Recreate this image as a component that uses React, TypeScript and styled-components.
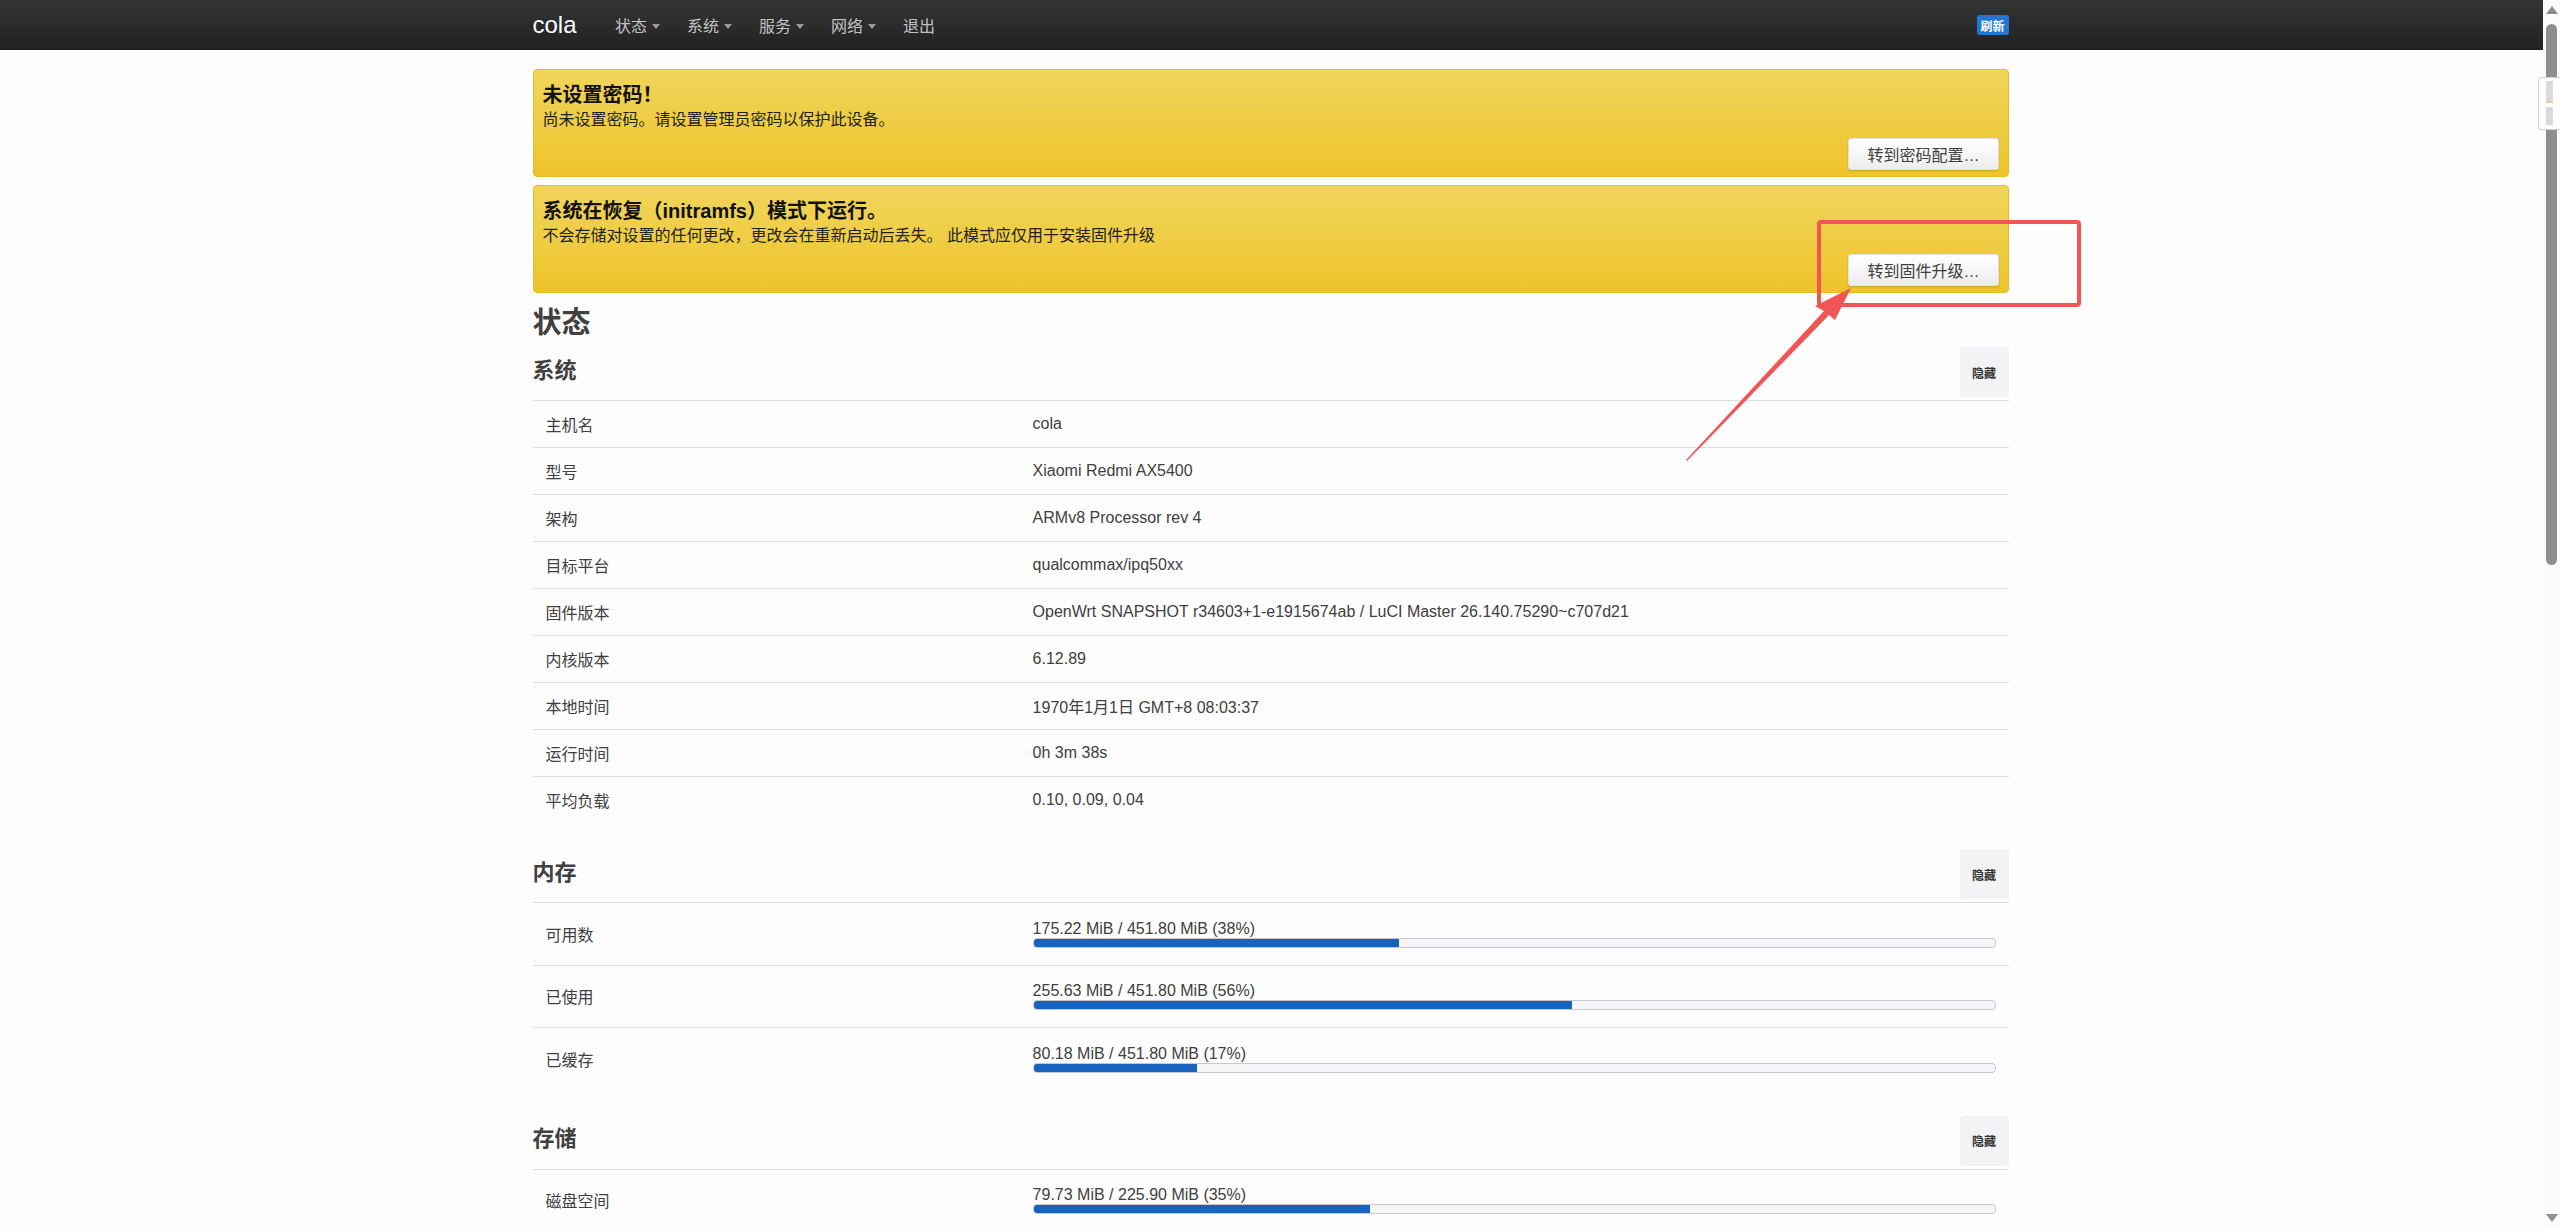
import styled, { createGlobalStyle } from "styled-components"


const GlobalStyle = createGlobalStyle`
	html, body {
		margin: 0;
		height: 100%;
		overflow: hidden;
		background: #fdfdfd;
	}
	body {
		font-family: "Liberation Sans", "Noto Sans CJK SC", sans-serif;
		color: #404040;
	}
	* {
		box-sizing: border-box;
	}
`

const Screen = styled.div`
	position: relative;
	display: flex;
	height: 100vh;
	overflow: hidden;
`

const Page = styled.div`
	flex: 1;
	min-width: 0;
	display: flex;
	flex-direction: column;
`

const Navbar = styled.header`
	flex: none;
	height: 50px;
	background: linear-gradient(#353535, #212121);
`

const Container = styled.div`
	width: 1476px;
	margin: 0 auto;
	position: relative;
	left: -1px;
`

const NavInner = styled(Container)`
	height: 100%;
	display: flex;
	align-items: center;
`

const Brand = styled.span`
	color: #fff;
	font-size: 24px;
	margin-right: 25px;
`

const NavItem = styled.span<{ $dropdown?: boolean }>`
	display: flex;
	align-items: center;
	gap: 5px;
	padding: 0 13.5px;
	font-size: 16px;
	color: #c2c2c2;

	&::after {
		content: "";
		display: ${p => p.$dropdown ? "block" : "none"};
		margin-top: 2px;
		border-top: 5px solid #9c9c9c;
		border-left: 4px solid transparent;
		border-right: 4px solid transparent;
	}
`

const Badge = styled.span`
	margin-left: auto;
	width: 32px;
	height: 20px;
	display: flex;
	align-items: center;
	justify-content: center;
	background: #2277d2;
	border-radius: 3px;
	color: #fff;
	font-size: 12px;
	font-weight: bold;
`

const Main = styled(Container)`
	padding-top: 19px;
`

const Alert = styled.div`
	height: 108px;
	margin-bottom: 8px;
	padding: 12px 9px 6px;
	display: flex;
	flex-direction: column;
	border: 1px solid #e6bd27;
	border-radius: 4px;
	background: linear-gradient(#f0d55c, #eec42a);
`

const AlertTitle = styled.div`
	font-size: 20px;
	line-height: 26px;
	font-weight: bold;
	color: #111;
`

const AlertText = styled.div`
	font-size: 16px;
	line-height: 24px;
	color: #222;
`

const AlertButton = styled.button`
	margin-top: auto;
	align-self: flex-end;
	height: 32px;
	padding: 0 18px;
	font-family: inherit;
	font-size: 16px;
	color: #404040;
	background: linear-gradient(#fff, #ececec);
	border: 1px solid #e2e2e2;
	border-radius: 3px;
	box-shadow: 0 1px 2px rgba(0, 0, 0, 0.18);
`

const PageTitle = styled.h2`
	margin: 0 0 2px;
	font-size: 29px;
	line-height: 44px;
	font-weight: bold;
	color: #404040;
`

const Section = styled.section`
	& + & {
		margin-top: 26px;
	}
`

const SectionHead = styled.div`
	height: 50px;
	margin-bottom: 3px;
	display: flex;
	align-items: center;
	justify-content: space-between;
`

const SectionTitle = styled.h3`
	margin: 0 0 9px;
	font-size: 22px;
	font-weight: bold;
	color: #404040;
`

const HideButton = styled.button`
	width: 49px;
	height: 50px;
	padding: 0;
	border: none;
	border-radius: 3px;
	background: #f3f3f5;
	font-family: inherit;
	font-size: 12px;
	font-weight: bold;
	color: #333;
`

const Row = styled.div<{ $tall?: boolean }>`
	display: grid;
	grid-template-columns: 33% 1fr;
	align-items: center;
	height: ${p => p.$tall ? 62.5 : 47}px;
	border-top: 1px solid #dedede;
	font-size: 16px;
`

const Cell = styled.div`
	padding: 0 13px;
	white-space: nowrap;
`

const BarText = styled.div`
	line-height: 18px;
`

const Bar = styled.div`
	height: 10px;
	border: 1px solid #c8c8cc;
	border-radius: 4px;
	background: #f6f6f8;
	overflow: hidden;
`

const Fill = styled.div`
	height: 100%;
	background: #1763be;
`

const Scrollbar = styled.div`
	flex: none;
	width: 17px;
	padding: 6px 0 7px;
	display: flex;
	flex-direction: column;
	align-items: center;
	background: #fbfbfb;
`

const ScrollArrow = styled.div<{ $down?: boolean }>`
	width: 0;
	height: 0;
	border-left: 6px solid transparent;
	border-right: 6px solid transparent;
	border-${p => p.$down ? "top" : "bottom"}: 8px solid #8c8c8c;
`

const ScrollThumb = styled.div`
	margin-top: 10px;
	width: 11px;
	height: 541px;
	border-radius: 6px;
	background: #8e8e8e;
`

const ScrollSpace = styled.div`
	flex: 1;
`

const MiniMap = styled.div`
	position: absolute;
	top: 77px;
	right: 0;
	width: 22px;
	height: 53px;
	background: #fff;
	border: 1px solid #d2d2d2;
	border-right: none;
	border-radius: 3px 0 0 3px;
`

const Annotation = styled.svg`
	position: absolute;
	top: 0;
	left: 0;
	width: 100%;
	height: 100%;
	pointer-events: none;
`

type Info = [string, string]
type Usage = [string, number, number, string]

const systemInfo: Info[] = [
	["主机名", "cola"],
	["型号", "Xiaomi Redmi AX5400"],
	["架构", "ARMv8 Processor rev 4"],
	["目标平台", "qualcommax/ipq50xx"],
	["固件版本", "OpenWrt SNAPSHOT r34603+1-e1915674ab / LuCI Master 26.140.75290~c707d21"],
	["内核版本", "6.12.89"],
	["本地时间", "1970年1月1日 GMT+8 08:03:37"],
	["运行时间", "0h 3m 38s"],
	["平均负载", "0.10, 0.09, 0.04"],
]

const memory: Usage[] = [
	["可用数", 175.22, 451.80, "MiB"],
	["已使用", 255.63, 451.80, "MiB"],
	["已缓存", 80.18, 451.80, "MiB"],
]

const storage: Usage[] = [
	["磁盘空间", 79.73, 225.90, "MiB"],
]

const UsageRow = ({ item }: { item: Usage }) => {
	const [label, used, total, unit] = item
	const pct = Math.floor(used / total * 100)
	return <Row $tall>
		<Cell>{label}</Cell>
		<Cell>
			<BarText>{used.toFixed(2)} {unit} / {total.toFixed(2)} {unit} ({pct}%)</BarText>
			<Bar>
				<Fill style={{ width: `${pct}%` }} />
			</Bar>
		</Cell>
	</Row>
}

const miniLines = [4, 6, 8, 10, 12, 14, 16, 18, 20, 22, 24, 30, 32, 34, 36, 38, 40, 42, 44, 46]

const App = () => {
	return <Screen>
		<GlobalStyle />
		<Page>
			<Navbar>
				<NavInner>
					<Brand>cola</Brand>
					<NavItem $dropdown>状态</NavItem>
					<NavItem $dropdown>系统</NavItem>
					<NavItem $dropdown>服务</NavItem>
					<NavItem $dropdown>网络</NavItem>
					<NavItem>退出</NavItem>
					<Badge>刷新</Badge>
				</NavInner>
			</Navbar>
			<Main>
				<Alert>
					<AlertTitle>未设置密码！</AlertTitle>
					<AlertText>尚未设置密码。请设置管理员密码以保护此设备。</AlertText>
					<AlertButton>转到密码配置…</AlertButton>
				</Alert>
				<Alert>
					<AlertTitle>系统在恢复（initramfs）模式下运行。</AlertTitle>
					<AlertText>不会存储对设置的任何更改，更改会在重新启动后丢失。 此模式应仅用于安装固件升级</AlertText>
					<AlertButton>转到固件升级…</AlertButton>
				</Alert>

				<PageTitle>状态</PageTitle>

				<Section>
					<SectionHead>
						<SectionTitle>系统</SectionTitle>
						<HideButton>隐藏</HideButton>
					</SectionHead>
					{systemInfo.map(([label, value]) => <Row key={label}>
						<Cell>{label}</Cell>
						<Cell>{value}</Cell>
					</Row>)}
				</Section>

				<Section>
					<SectionHead>
						<SectionTitle>内存</SectionTitle>
						<HideButton>隐藏</HideButton>
					</SectionHead>
					{memory.map(item => <UsageRow key={item[0]} item={item} />)}
				</Section>

				<Section>
					<SectionHead>
						<SectionTitle>存储</SectionTitle>
						<HideButton>隐藏</HideButton>
					</SectionHead>
					{storage.map(item => <UsageRow key={item[0]} item={item} />)}
				</Section>
			</Main>
		</Page>
		<Scrollbar>
			<ScrollArrow />
			<ScrollThumb />
			<ScrollSpace />
			<ScrollArrow $down />
		</Scrollbar>
		<MiniMap>
			<svg width="21" height="51" viewBox="0 0 21 51">
				{miniLines.map(y => <line key={y} x1="7" x2="14" y1={y} y2={y}
					stroke={y === 24 ? "#e0a020" : "#b4b4b4"} strokeWidth="1" />)}
			</svg>
		</MiniMap>
		<Annotation>
			<rect x="1819" y="222" width="260" height="83" rx="2"
				fill="none" stroke="#f25555" strokeWidth="4" />
			<polygon fill="#f25555"
				points="1851,288 1835,320 1829,315 1687,461 1686,460 1824,311 1815,306" />
		</Annotation>
	</Screen>
}

export default App
